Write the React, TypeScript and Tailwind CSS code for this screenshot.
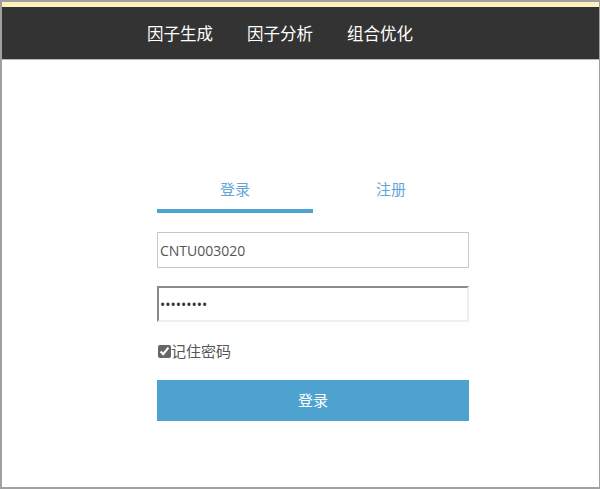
import React from 'react';

const cjk = { fontFamily: '"Open Sans", "Noto Sans CJK SC", sans-serif' };

export default function App() {
    return (
        <div className="w-[600px] h-[489px] bg-white border-t-2 border-l-2 border-r border-b-2 border-[#a0a0a0] flex flex-col" style={cjk}>
            <div className="h-[5px] bg-[#fcf1bd]" />
            <nav className="h-[53px] bg-[#333333] border-b border-[#b8b8b8] flex items-center pt-[3px] pl-[128px]">
                {['因子生成', '因子分析', '组合优化'].map((t) => (
                    <a key={t} className="px-[17px] text-[16.5px] text-white">
                        {t}
                    </a>
                ))}
            </nav>

            <div className="ml-[155px] w-[312px] mt-[119px]">
                <div className="flex">
                    <div className="w-1/2 flex flex-col items-center">
                        <span className="text-[15px] text-[#5fa6d6] leading-[20px]">登录</span>
                        <div className="mt-[10px] h-[4px] w-full bg-[#4ea3d1]" />
                    </div>
                    <div className="w-1/2 flex flex-col items-center">
                        <span className="text-[15px] text-[#5fa6d6] leading-[20px]">注册</span>
                    </div>
                </div>

                <input
                    className="mt-[19px] block w-[312px] h-[36px] border border-[#c8c8c8] px-[2px] text-[14px] text-[#555] outline-none"
                    defaultValue="CNTU003020"
                    style={cjk}
                />
                <input
                    type="password"
                    className="mt-[18px] block w-[312px] h-[36px] border-2 border-t-[#8a8a8a] border-l-[#8a8a8a] border-r-[#eeeeee] border-b-[#eeeeee] px-[1px] text-[14px] text-[#333] outline-none"
                    defaultValue="123456789"
                />

                <label className="mt-[19px] flex items-center text-[15px] text-[#555] leading-[20px]">
                    <input type="checkbox" defaultChecked className="w-[13px] h-[13px] ml-[1px] accent-[#666]" />
                    <span>记住密码</span>
                </label>

                <button className="mt-[19px] block w-[312px] h-[41px] bg-[#4ea2d0] text-white text-[15px]" style={cjk}>
                    登录
                </button>
            </div>
        </div>
    );
}
